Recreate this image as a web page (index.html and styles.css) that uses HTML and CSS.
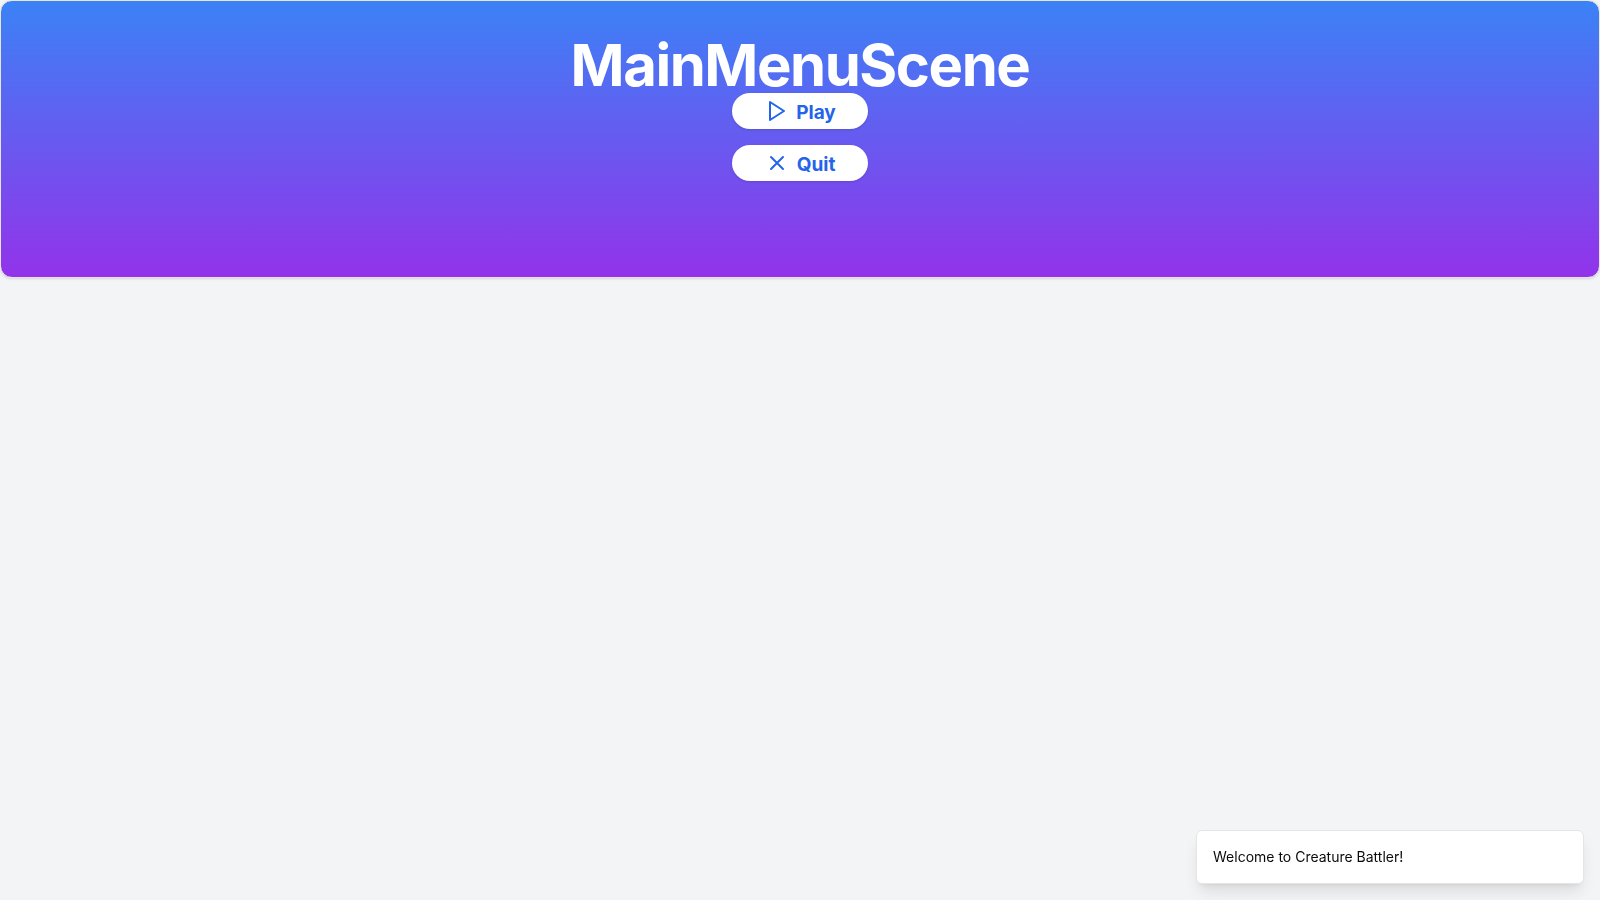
FILE: index.html
```html
<!DOCTYPE html>
<html lang="en">
<head>
<meta charset="utf-8">
<meta name="viewport" content="width=device-width, initial-scale=1">
<title>Creature Battler</title>
<link rel="stylesheet" href="styles.css">
</head>
<body>
<main class="menu-card">
  <h1 class="title">MainMenuScene</h1>
  <div class="actions">
    <button class="pill" type="button">
      <svg class="icon" viewBox="0 0 24 24" aria-hidden="true"><path d="M6 3L20 12L6 21Z"/></svg>
      <span class="label">Play</span>
    </button>
    <button class="pill" type="button">
      <svg class="icon" viewBox="0 0 24 24" aria-hidden="true"><path d="M18 6L6 18M6 6L18 18"/></svg>
      <span class="label">Quit</span>
    </button>
  </div>
</main>
<div class="toast" role="status">Welcome to Creature Battler!</div>
</body>
</html>
```
FILE: styles.css
```css
*,
*::before,
*::after {
  box-sizing: border-box;
}

body {
  margin: 0;
  min-height: 100vh;
  background: #f3f4f6;
  color: #0a0a0a;
  font-family: Inter, "Liberation Sans", sans-serif;
}

.menu-card {
  display: flex;
  flex-direction: column;
  align-items: center;
  padding: 36px 32px 96px;
  border: 1px solid #e5e5e5;
  border-radius: 12px;
  background: linear-gradient(to bottom, #3b82f6, #9333ea);
  box-shadow: 0 1px 3px rgb(0 0 0 / 0.1), 0 1px 2px -1px rgb(0 0 0 / 0.1);
}

.title {
  margin: 0;
  color: #fff;
  font-size: 58px;
  font-weight: 700;
  line-height: 56px;
  letter-spacing: -0.025em;
}

.actions {
  display: flex;
  flex-direction: column;
  gap: 16px;
}

.pill {
  display: flex;
  align-items: center;
  justify-content: center;
  gap: 8px;
  height: 36px;
  padding: 0 32px;
  border: 0;
  border-radius: 18px;
  background: #fff;
  box-shadow: 0 1px 3px rgb(0 0 0 / 0.1), 0 1px 2px -1px rgb(0 0 0 / 0.1);
  color: #2563eb;
  font: 700 19px/28px Inter, "Liberation Sans", sans-serif;
  cursor: pointer;
}

.label {
  padding-top: 4px;
}

.icon {
  width: 24px;
  height: 24px;
  fill: none;
  stroke: currentColor;
  stroke-width: 2;
  stroke-linecap: round;
  stroke-linejoin: round;
}

.toast {
  position: fixed;
  right: 16px;
  bottom: 16px;
  width: 388px;
  max-width: calc(100% - 32px);
  padding: 16px;
  border: 1px solid #e5e5e5;
  border-radius: 6px;
  background: #fff;
  box-shadow: 0 10px 15px -3px rgb(0 0 0 / 0.1), 0 4px 6px -4px rgb(0 0 0 / 0.1);
  font-size: 14px;
  line-height: 20px;
}
```
